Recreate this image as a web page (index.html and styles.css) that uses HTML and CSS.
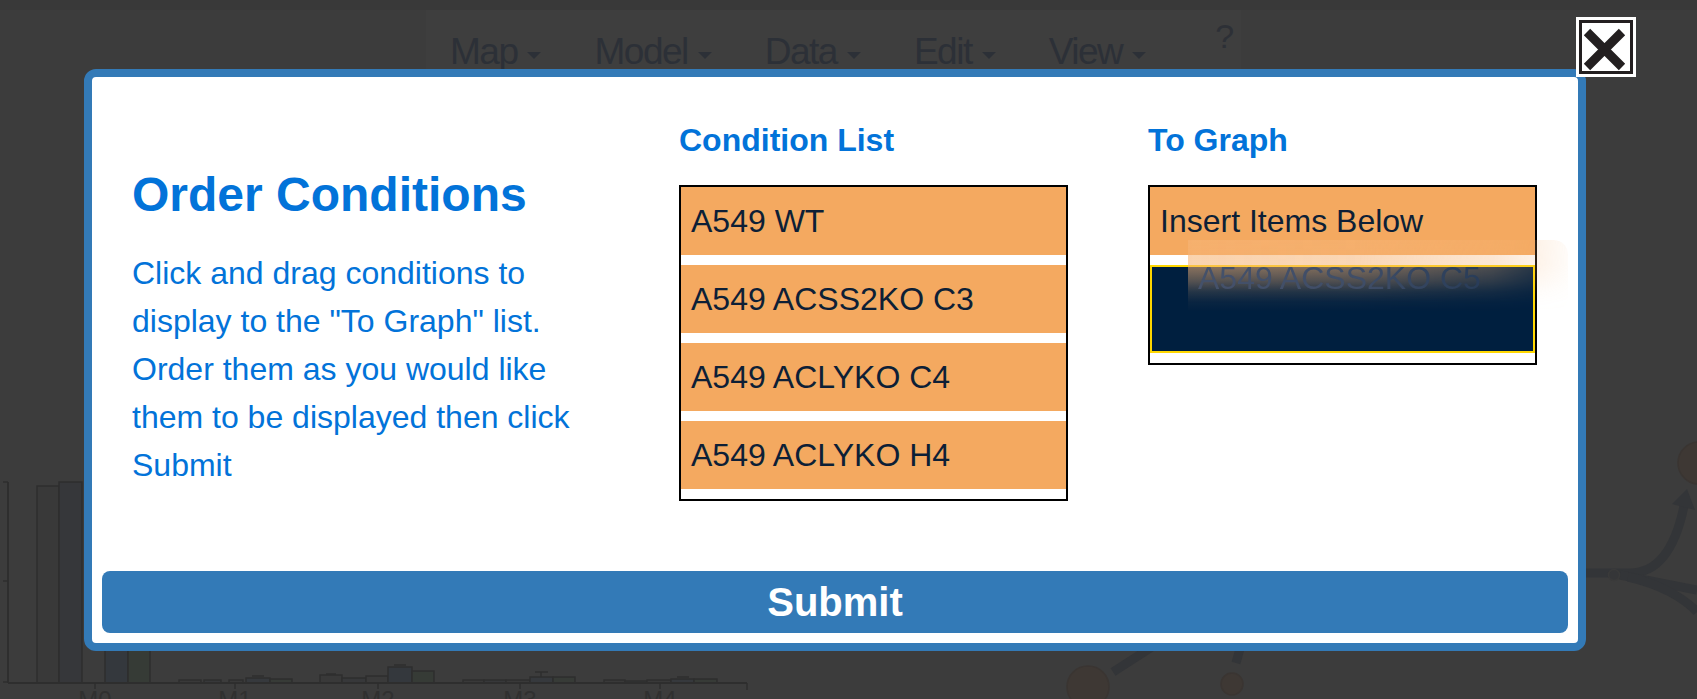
FILE: index.html
```html
<!DOCTYPE html>
<html lang="en">
<head>
<meta charset="utf-8">
<title>Order Conditions</title>
<link rel="stylesheet" href="styles.css">
</head>
<body>
<div class="app">
  <div class="topstrip"></div>
  <nav class="navbar">
    <span class="nav-item">Map<i class="caret"></i></span>
    <span class="nav-item">Model<i class="caret"></i></span>
    <span class="nav-item">Data<i class="caret"></i></span>
    <span class="nav-item">Edit<i class="caret"></i></span>
    <span class="nav-item">View<i class="caret"></i></span>
    <span class="nav-help">?</span>
  </nav>
  <svg class="canvas" width="1697" height="699" viewBox="0 0 1697 699" xmlns="http://www.w3.org/2000/svg">
    <g class="chart" stroke="#2e2e2e" stroke-width="1.5">
      <line x1="8" y1="482" x2="8" y2="683" stroke-width="2"/>
      <line x1="3" y1="482" x2="8" y2="482"/>
      <line x1="3" y1="581" x2="8" y2="581"/>
      <line x1="3" y1="682" x2="8" y2="682"/>
      <rect x="37" y="486" width="22" height="197" fill="#393939"/>
      <rect x="59" y="482" width="23" height="201" fill="#36373a"/>
      <rect x="105" y="490" width="23" height="193" fill="#34383d"/>
      <rect x="128" y="490" width="22" height="193" fill="#363b36"/>
      <rect x="179" y="680" width="22" height="3" fill="#393939"/>
      <rect x="204" y="680" width="17" height="3" fill="#37383a"/>
      <rect x="229" y="680" width="14" height="3" fill="#393939"/>
      <rect x="246" y="678" width="24" height="5" fill="#36393d"/>
      <rect x="270" y="679" width="22" height="4" fill="#373b37"/>
      <line x1="252" y1="676" x2="264" y2="676"/>
      <rect x="320" y="675" width="22" height="8" fill="#393939"/>
      <rect x="342" y="678" width="24" height="5" fill="#37383a"/>
      <rect x="366" y="676" width="22" height="7" fill="#3a3a3a"/>
      <rect x="388" y="667" width="24" height="16" fill="#34383d"/>
      <rect x="412" y="671" width="22" height="12" fill="#363b36"/>
      <line x1="326" y1="674" x2="336" y2="674"/>
      <line x1="394" y1="665" x2="406" y2="665"/>
      <rect x="463" y="680" width="21" height="3" fill="#393939"/>
      <rect x="484" y="680" width="22" height="3" fill="#37383a"/>
      <rect x="506" y="680" width="24" height="3" fill="#393939"/>
      <rect x="530" y="677" width="23" height="6" fill="#36393d"/>
      <rect x="553" y="677" width="22" height="6" fill="#373b37"/>
      <line x1="535" y1="672" x2="548" y2="672"/>
      <line x1="541" y1="672" x2="541" y2="677"/>
      <rect x="604" y="680" width="21" height="3" fill="#393939"/>
      <rect x="625" y="681" width="22" height="2" fill="#37383a"/>
      <rect x="647" y="680" width="24" height="3" fill="#393939"/>
      <rect x="671" y="679" width="23" height="4" fill="#36393d"/>
      <rect x="694" y="679" width="23" height="4" fill="#373b37"/>
      <line x1="677" y1="677" x2="689" y2="677"/>
      <line x1="8" y1="683" x2="747" y2="683" stroke-width="2"/>
      <line x1="747" y1="683" x2="747" y2="690"/>
      <line x1="95" y1="683" x2="95" y2="689"/>
      <line x1="235" y1="683" x2="235" y2="689"/>
      <line x1="378" y1="683" x2="378" y2="689"/>
      <line x1="520" y1="683" x2="520" y2="689"/>
      <line x1="660" y1="683" x2="660" y2="689"/>
    </g>
    <g class="axis-labels" fill="#303030" font-size="24" text-anchor="middle">
      <text x="95" y="708">M0</text>
      <text x="235" y="708">M1</text>
      <text x="378" y="708">M2</text>
      <text x="520" y="708">M3</text>
      <text x="660" y="708">M4</text>
    </g>
    <g class="network" fill="none" stroke="#333538" stroke-width="9">
      <path d="M1560 573 L1630 573 C1660 573 1676 545 1684 506"/>
      <path d="M1620 575 L1697 590"/>
      <path d="M1628 577 C1660 584 1684 598 1697 612"/>
      <path d="M1113 672 L1155 645"/>
      <path d="M1236 663 L1241 645"/>
    </g>
    <polygon points="1687,489 1672,504 1695,510" fill="#333538"/>
    <circle cx="1614" cy="575" r="5.5" fill="#353638" stroke="#3a3a3a" stroke-width="1.5"/>
    <circle cx="1699" cy="463" r="21" fill="#3e3834" stroke="#3a3532" stroke-width="1.5"/>
    <circle cx="1088" cy="687" r="21" fill="#3e3834" stroke="#3a3532" stroke-width="1.5"/>
    <circle cx="1232" cy="684" r="11" fill="#3e3834" stroke="#3a3532" stroke-width="1.5"/>
  </svg>
</div>

<div class="modal">
  <div class="modal-body">
    <div class="intro">
      <h2 class="title">Order Conditions</h2>
      <p class="instructions">Click and drag conditions to display to the "To Graph" list. Order them as you would like them to be displayed then click Submit</p>
    </div>
    <div class="list-col">
      <h3 class="list-heading">Condition List</h3>
      <ul class="sortable">
        <li class="item">A549 WT</li>
        <li class="item">A549 ACSS2KO C3</li>
        <li class="item">A549 ACLYKO C4</li>
        <li class="item">A549 ACLYKO H4</li>
      </ul>
    </div>
    <div class="list-col">
      <h3 class="list-heading">To Graph</h3>
      <ul class="sortable">
        <li class="item">Insert Items Below</li>
        <li class="placeholder"></li>
      </ul>
    </div>
  </div>
  <div class="modal-footer">
    <button class="submit" type="button">Submit</button>
  </div>
</div>

<div class="drag-ghost">A549 ACSS2KO C5</div>

<button class="close" type="button" aria-label="Close">
  <span class="close-inner">
    <svg width="48" height="48" viewBox="0 0 48 48" xmlns="http://www.w3.org/2000/svg">
      <path d="M5 9 L40 44 M40 9 L5 44" stroke="#231f20" stroke-width="9" stroke-linecap="butt" fill="none"/>
    </svg>
  </span>
</button>
</body>
</html>
```

FILE: styles.css
```css
html, body {
  margin: 0;
  padding: 0;
}

body {
  width: 1697px;
  height: 699px;
  overflow: hidden;
  background: #3c3c3c;
  font-family: "Liberation Sans", Arial, sans-serif;
  position: relative;
}

.app {
  position: relative;
  width: 1697px;
  height: 699px;
}

.topstrip {
  height: 10px;
  background: #393939;
}

.navbar {
  position: relative;
  z-index: 1;
  margin-left: 426px;
  width: 815px;
  height: 70px;
  box-sizing: border-box;
  padding-left: 24px;
  background: #3e3e3e;
  display: flex;
  align-items: flex-start;
  gap: 53px;
  color: #2c3037;
  font-size: 37px;
  line-height: 1;
}

.nav-item {
  display: inline-flex;
  align-items: center;
  padding-top: 23px;
  letter-spacing: -1.5px;
}

.caret {
  display: inline-block;
  width: 0;
  height: 0;
  margin-left: 10px;
  margin-top: 8px;
  border-left: 7px solid transparent;
  border-right: 7px solid transparent;
  border-top: 7px solid #2c3037;
}

.nav-help {
  padding-top: 9px;
  margin-left: 16px;
  font-size: 34px;
  color: #2d3036;
}

.canvas {
  position: absolute;
  left: 0;
  top: 0;
  z-index: 0;
}

.axis-labels text {
  font-family: "Liberation Sans", Arial, sans-serif;
}

/* Modal */
.modal {
  position: absolute;
  left: 84px;
  top: 69px;
  width: 1502px;
  height: 582px;
  box-sizing: border-box;
  border: 8px solid #337ab7;
  border-radius: 12px;
  background: #ffffff;
  display: flex;
  flex-direction: column;
  z-index: 5;
}

.modal-body {
  flex: 1;
  box-sizing: border-box;
  padding: 40px 40px 0 40px;
  display: grid;
  grid-template-columns: 467px 389px 389px;
  column-gap: 80px;
  align-items: start;
}

.title {
  margin: 52px 0 27px 0;
  font-size: 48px;
  line-height: 1.1;
  font-weight: 700;
  color: #0273d9;
}

.instructions {
  margin: 0;
  font-size: 32px;
  line-height: 48px;
  color: #0273d9;
}

.list-heading {
  margin: 6px 0 27px 0;
  font-size: 32px;
  line-height: 1.1;
  font-weight: 700;
  color: #0273d9;
}

.sortable {
  list-style: none;
  margin: 0;
  padding: 0;
  border: 2px solid #000;
  background: #fff;
}

.item {
  height: 68px;
  box-sizing: border-box;
  padding: 10px;
  margin-bottom: 10px;
  background: #f4a960;
  color: #0d1f36;
  font-size: 32px;
  line-height: 48px;
  white-space: nowrap;
}

.placeholder {
  height: 88px;
  box-sizing: border-box;
  margin-bottom: 10px;
  background: #001f3f;
  border: 2px solid #ffd700;
}

.modal-footer {
  padding: 10px;
}

.submit {
  display: flex;
  align-items: center;
  justify-content: center;
  width: 100%;
  height: 62px;
  border: 0;
  border-radius: 8px;
  background: #337ab7;
  color: #ffffff;
  font-family: "Liberation Sans", Arial, sans-serif;
  font-size: 40px;
  font-weight: 700;
  line-height: 1;
  padding: 0;
}

.drag-ghost {
  position: absolute;
  left: 1188px;
  top: 240px;
  width: 380px;
  height: 72px;
  box-sizing: border-box;
  padding: 14px 10px 10px 10px;
  z-index: 8;
  font-size: 32px;
  line-height: 48px;
  color: #45526b;
  border-radius: 0 14px 14px 0;
  background: linear-gradient(to bottom,
    rgba(246, 180, 118, 0.62) 0%,
    rgba(246, 180, 118, 0.58) 35%,
    rgba(246, 180, 118, 0.35) 57%,
    rgba(246, 180, 118, 0.15) 72%,
    rgba(246, 180, 118, 0.04) 86%,
    rgba(246, 180, 118, 0) 100%);
  -webkit-mask-image: linear-gradient(to right, #000 0%, rgba(0,0,0,0.92) 45%, rgba(0,0,0,0.55) 80%, rgba(0,0,0,0.08) 100%);
  mask-image: linear-gradient(to right, #000 0%, rgba(0,0,0,0.92) 45%, rgba(0,0,0,0.55) 80%, rgba(0,0,0,0.08) 100%);
  white-space: nowrap;
}

/* Close button */
.close {
  position: absolute;
  left: 1576px;
  top: 17px;
  width: 60px;
  height: 60px;
  box-sizing: border-box;
  padding: 3px;
  margin: 0;
  border: 0;
  background: #ffffff;
  z-index: 9;
  display: block;
}

.close-inner {
  display: flex;
  align-items: center;
  justify-content: center;
  width: 100%;
  height: 100%;
  box-sizing: border-box;
  border: 3px solid #231f20;
  background: #ffffff;
}
```
